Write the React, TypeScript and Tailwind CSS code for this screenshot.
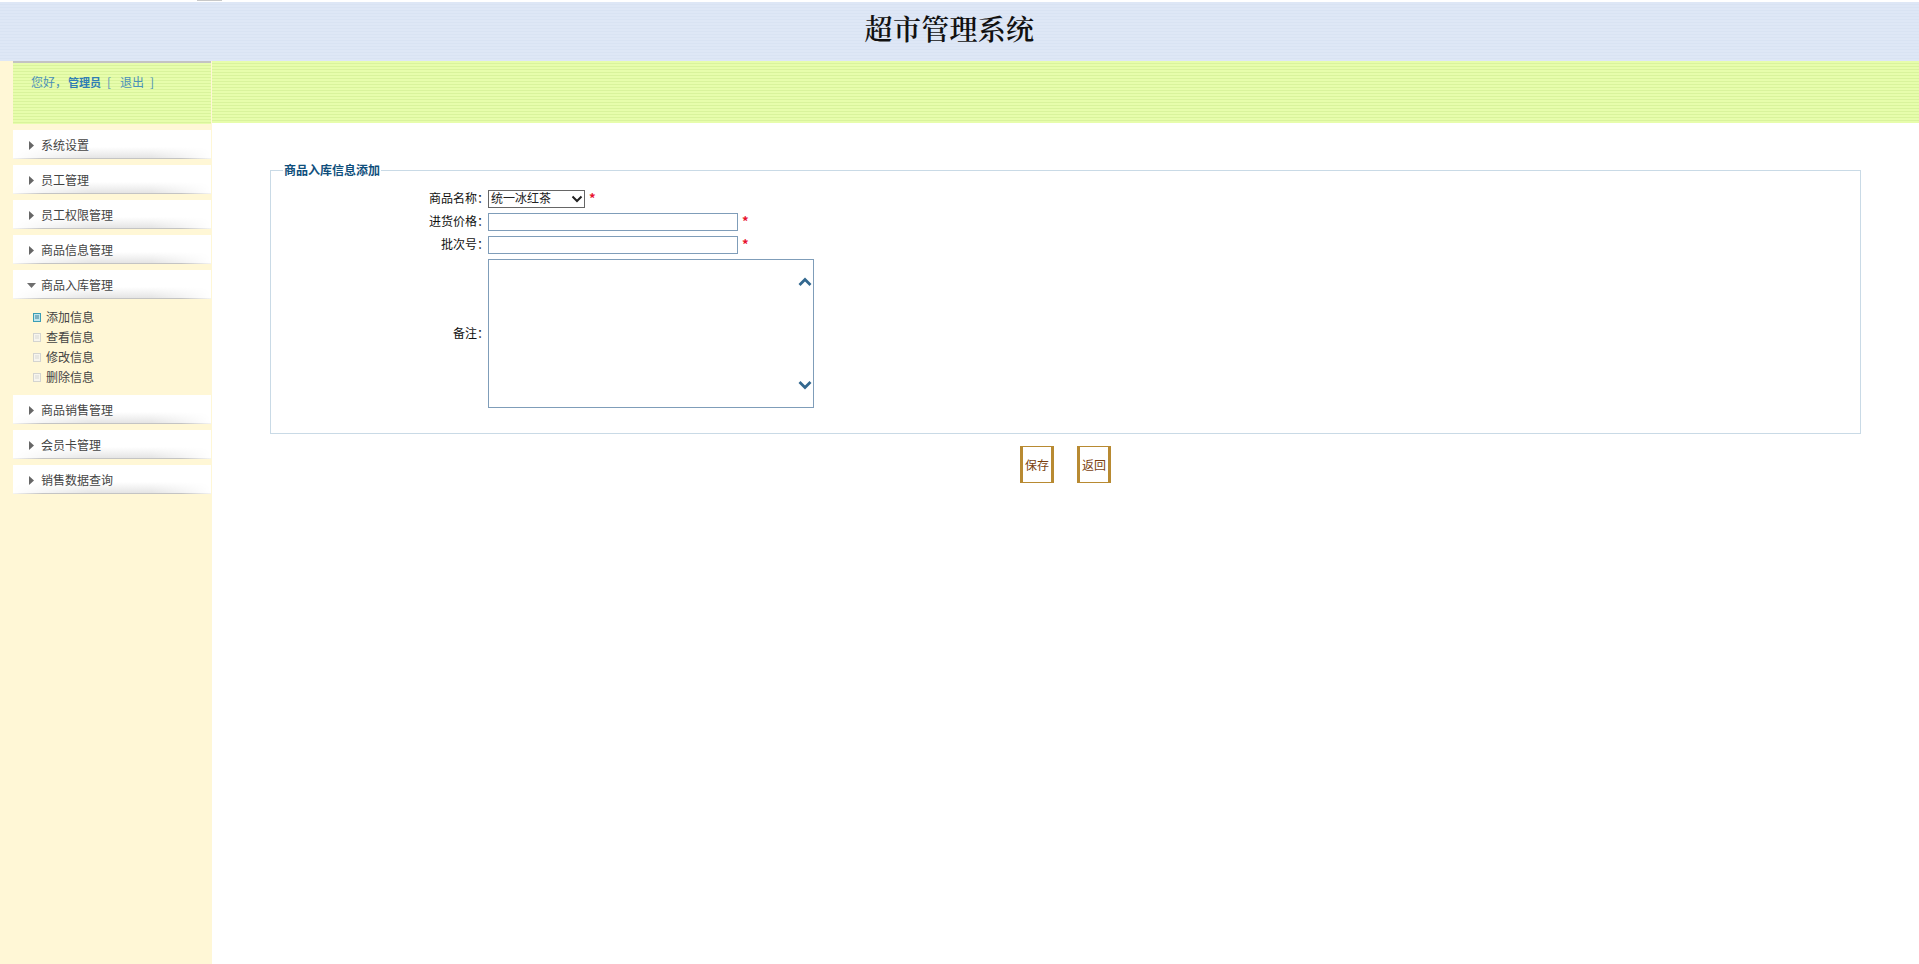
const font = "font-['SimSun','Noto_Sans_CJK_SC','Liberation_Sans',sans-serif]";

function Arrow({ open }: { open?: boolean }) {
  return open ? (
    <svg width="9" height="5" viewBox="0 0 9 5" className="ml-[1px] mr-[5px] mt-[1px]"><path d="M0 0h9L4.5 5z" fill="#6e6e6e" /></svg>
  ) : (
    <svg width="5" height="9" viewBox="0 0 5 9" className="ml-[3px] mr-[7px] mt-[1px]"><path d="M0 0l5 4.5-5 4.5z" fill="#666" /></svg>
  );
}

function Menu({ label, open }: { label: string; open?: boolean }) {
  return (
    <div className="relative flex h-[29px] items-center overflow-hidden bg-white pl-[13px] text-[12px] text-[#444]">
      <div className="absolute inset-x-0 bottom-0 h-[12px] bg-[linear-gradient(to_bottom,#ffffff,#e2e2e2)] [mask-image:linear-gradient(to_right,transparent,black_40%,black_70%,transparent)]" />
      <div className="absolute bottom-0 left-0 right-0 h-px bg-[linear-gradient(to_right,#f4f4f4,#c4c4c4_15%,#c4c4c4_85%,#f4f4f4)]" />
      <div className="relative flex items-center">
        <Arrow open={open} />
        <span>{label}</span>
      </div>
    </div>
  );
}

function Doc({ active }: { active?: boolean }) {
  return (
    <svg width="8" height="9" viewBox="0 0 8 9" className="mr-[5px]">
      <rect x="0.5" y="0.5" width="7" height="8" fill={active ? "#bfe6ee" : "#f7f5ee"} stroke={active ? "#3a9db5" : "#d4d4d0"} />
      <path d="M2 3h4M2 5h4" stroke={active ? "#3c7f96" : "#d9d9d4"} />
    </svg>
  );
}

function Sub({ label, active }: { label: string; active?: boolean }) {
  return (
    <div className="flex h-[20px] items-center pl-[33px] text-[12px] text-[#444]">
      <Doc active={active} />
      <span>{label}</span>
    </div>
  );
}

function Star() {
  return <span className="ml-[4px] -mt-[3px] text-[13px] leading-none font-bold text-[#e8112d]">*</span>;
}

function Row({ label, className, children }: { label: string; className: string; children: React.ReactNode }) {
  return (
    <div className={`flex items-center ${className}`}>
      <div className="-mt-[2px] mr-[-1px] w-[218px] text-right text-[12px] text-[#111]">{label}</div>
      {children}
    </div>
  );
}

export default function App() {
  return (
    <div className={`flex h-[964px] w-[1919px] flex-col overflow-hidden bg-white ${font}`}>
      <div className="flex h-[2px] shrink-0 pl-[197px]"><div className="h-px w-[25px] bg-[#c8c8c8]" /></div>
      <header className="flex h-[59px] shrink-0 items-center justify-center bg-[repeating-linear-gradient(to_bottom,#dee7f6_0px,#dee7f6_2px,#d9e3f3_2px,#d9e3f3_3px)] pb-[7px] pr-[20px]">
        <h1 className="text-[28px] leading-none font-semibold tracking-[0.3px] text-[#111] font-['Noto_Serif_CJK_SC','Noto_Sans_CJK_SC',serif]">超市管理系统</h1>
      </header>
      <div className="flex flex-1">
        <aside className="w-[212px] shrink-0 bg-[#fff7d6]">
          <div className="ml-[13px] mr-[1px] h-[63px] border-t-2 border-[#c3c3c3] bg-[repeating-linear-gradient(to_bottom,#e7fdac_0px,#e7fdac_2px,#d9f39c_2px,#d9f39c_3px)] pl-[18px] pt-[11px] text-[12px] leading-[16px] text-[#4a90b8]">
            您好，<b className="ml-[1px] text-[11px] text-[#2f7db5]">管理员</b><span className="ml-[6px]">[</span><span className="ml-[9px]">退出</span><span className="ml-[6px]">]</span>
          </div>
          <div className="ml-[13px] mr-[1px] flex flex-col pt-[6px]">
            <div className="flex flex-col gap-[6px]">
              <Menu label="系统设置" />
              <Menu label="员工管理" />
              <Menu label="员工权限管理" />
              <Menu label="商品信息管理" />
              <Menu label="商品入库管理" open />
            </div>
            <div className="h-[96px] pt-[8px] -ml-[13px]">
              <Sub label="添加信息" active />
              <Sub label="查看信息" />
              <Sub label="修改信息" />
              <Sub label="删除信息" />
            </div>
            <div className="flex flex-col gap-[6px]">
              <Menu label="商品销售管理" />
              <Menu label="会员卡管理" />
              <Menu label="销售数据查询" />
            </div>
          </div>
        </aside>
        <main className="flex-1">
          <div className="h-[62px] bg-[repeating-linear-gradient(to_bottom,#e7fdac_0px,#e7fdac_2px,#d9f39c_2px,#d9f39c_3px)]" />
          <div className="px-[58px] pt-[39px]">
            <fieldset className="h-[272px] border border-[#c9dae6]">
              <legend className="ml-[12px] px-[1px] text-[12px] font-bold leading-[16px] text-[#0f4f7c]">商品入库信息添加</legend>
              <div className="pt-[12px]">
                <Row label="商品名称：" className="h-[18px]">
                  <div className="relative h-[18px] w-[97px] border border-[#666] bg-white pl-[2px] text-[12px] leading-[14px] text-[#222]">
                    统一冰红茶
                    <svg width="12" height="8" viewBox="0 0 12 8" className="absolute right-[1px] top-[4px]"><path d="M1.5 1.5L6 6l4.5-4.5" fill="none" stroke="#222" strokeWidth="2" /></svg>
                  </div>
                  <Star />
                </Row>
                <Row label="进货价格：" className="mt-[5px] h-[18px]">
                  <input className="h-[18px] w-[250px] border border-[#7f9db9] bg-white" />
                  <Star />
                </Row>
                <Row label="批次号：" className="mt-[5px] h-[18px]">
                  <input className="h-[18px] w-[250px] border border-[#7f9db9] bg-white" />
                  <Star />
                </Row>
                <Row label="备注：" className="mt-[5px] h-[149px]">
                  <div className="relative h-[149px] w-[326px] border border-[#7f9db9] bg-white">
                    <svg width="14" height="10" viewBox="0 0 14 10" className="absolute right-[1px] top-[17px]"><path d="M1.5 8l5.5-5.5L12.5 8" fill="none" stroke="#33688f" strokeWidth="2.8" /></svg>
                    <svg width="14" height="10" viewBox="0 0 14 10" className="absolute right-[1px] bottom-[17px]"><path d="M1.5 2l5.5 5.5L12.5 2" fill="none" stroke="#33688f" strokeWidth="2.8" /></svg>
                  </div>
                </Row>
              </div>
            </fieldset>
            <div className="mt-[12px] flex justify-center gap-[23px]">
              <button className="h-[37px] w-[34px] border-x-[3px] border-y border-[#b88a32] bg-white p-0 text-[12px] text-[#7a3f10]">保存</button>
              <button className="h-[37px] w-[34px] border-x-[3px] border-y border-[#b88a32] bg-white p-0 text-[12px] text-[#7a3f10]">返回</button>
            </div>
          </div>
        </main>
      </div>
    </div>
  );
}
